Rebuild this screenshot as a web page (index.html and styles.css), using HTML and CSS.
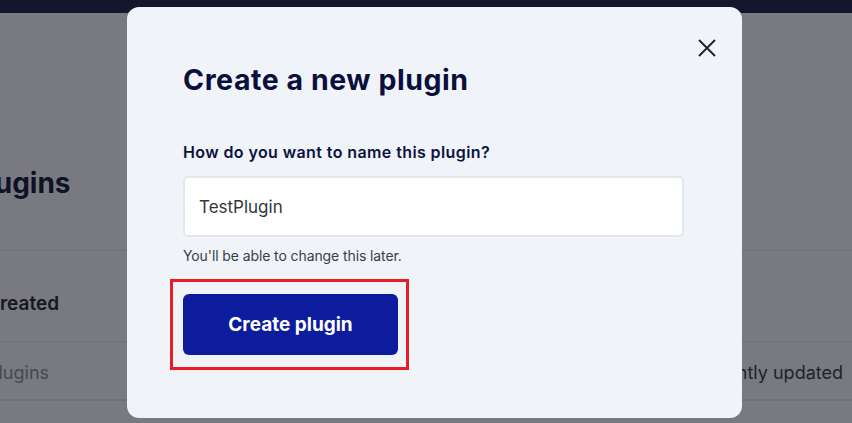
FILE: index.html
```html
<!DOCTYPE html>
<html lang="en">
<head>
<meta charset="utf-8">
<title>Create a new plugin</title>
<link rel="stylesheet" href="styles.css">
</head>
<body>
  <div class="page">
    <header class="topbar"></header>
    <main class="content">
      <h1 class="page-title">Plugins</h1>
      <div class="row row-head">
        <span class="col-created">Created</span>
      </div>
      <div class="row row-tabs">
        <span class="tab">Plugins</span>
        <span class="tab tab-right">Recently updated</span>
      </div>
    </main>
  </div>

  <div class="overlay"></div>

  <div class="modal" role="dialog" aria-labelledby="modal-title">
    <button class="close" aria-label="Close">
      <svg width="18" height="18" viewBox="0 0 18 18" fill="none" stroke="#23252b" stroke-width="2" stroke-linecap="butt">
        <path d="M1 1 L17 17 M17 1 L1 17"/>
      </svg>
    </button>
    <h2 id="modal-title" class="modal-title">Create a new plugin</h2>
    <label class="field-label" for="plugin-name">How do you want to name this plugin?</label>
    <div class="input">TestPlugin</div>
    <p class="hint">You'll be able to change this later.</p>
    <div class="highlight">
      <button class="primary">Create plugin</button>
    </div>
  </div>
</body>
</html>
```

FILE: styles.css
```css
* { box-sizing: border-box; }

html, body {
  margin: 0;
  padding: 0;
  width: 852px;
  height: 423px;
  overflow: hidden;
}

body {
  font-family: Inter, "Noto Sans", sans-serif;
  background: #ffffff;
}

.page {
  width: 852px;
  height: 423px;
  display: flex;
  flex-direction: column;
  background: #ffffff;
}

.topbar {
  height: 13px;
  background: #1a1e45;
  flex: none;
}

.content {
  display: flex;
  flex-direction: column;
}

.page-title {
  margin: 153px 0 0 -31px;
  height: 84px;
  font-size: 28px;
  line-height: 34px;
  font-weight: 700;
  color: #101433;
}

.row {
  display: flex;
  align-items: center;
  border-top: 1px solid #e6e8ec;
}

.row-head {
  height: 91px;
  padding-top: 14px;
}

.col-created {
  margin-left: -14px;
  font-size: 19px;
  font-weight: 600;
  color: #1e2128;
}

.row-tabs {
  height: 60px;
  padding-top: 4px;
  justify-content: space-between;
  border-bottom: 2px solid #e6e8ec;
}

.tab {
  font-size: 18px;
  color: #8a8e96;
  margin-left: -13px;
}

.tab-right {
  margin-left: 0;
  margin-right: 9px;
  color: #343841;
}

.overlay {
  position: fixed;
  inset: 0;
  background: rgba(15, 18, 28, 0.56);
}

.modal {
  position: absolute;
  left: 127px;
  top: 7px;
  width: 615px;
  height: 411px;
  background: #f0f4f9;
  border-radius: 12px;
  padding: 56px 56px 0 56px;
  display: flex;
  flex-direction: column;
  align-items: stretch;
}

.close {
  position: absolute;
  top: 32px;
  left: 571px;
  width: 18px;
  height: 18px;
  padding: 0;
  border: 0;
  background: transparent;
  display: flex;
}

.modal-title {
  margin: 0;
  font-size: 28.5px;
  line-height: 34px;
  font-weight: 700;
  color: #0b0f3d;
  letter-spacing: 0.55px;
}

.field-label {
  margin-top: 45px;
  font-size: 16px;
  line-height: 20px;
  font-weight: 600;
  color: #0d1240;
  letter-spacing: 0.4px;
}

.input {
  margin-top: 14px;
  height: 61px;
  width: 501px;
  background: #ffffff;
  border: 2px solid #e2e7ef;
  border-radius: 5px;
  padding: 0 14px;
  display: flex;
  align-items: center;
  font-size: 17px;
  color: #33363c;
}

.hint {
  margin: 10px 0 0;
  font-size: 14px;
  line-height: 18px;
  color: #3a3d44;
  letter-spacing: -0.1px;
}

.highlight {
  align-self: flex-start;
  margin: 14px 0 0 -13px;
  border: 3px solid #e81d27;
  padding: 12px 8px 12px 10px;
  display: flex;
}

.primary {
  width: 215px;
  height: 61px;
  border: 0;
  border-radius: 6px;
  background: #0c1c9c;
  color: #ffffff;
  font-family: Inter, "Noto Sans", sans-serif;
  font-size: 19px;
  font-weight: 700;
  letter-spacing: 0px;
}
```
